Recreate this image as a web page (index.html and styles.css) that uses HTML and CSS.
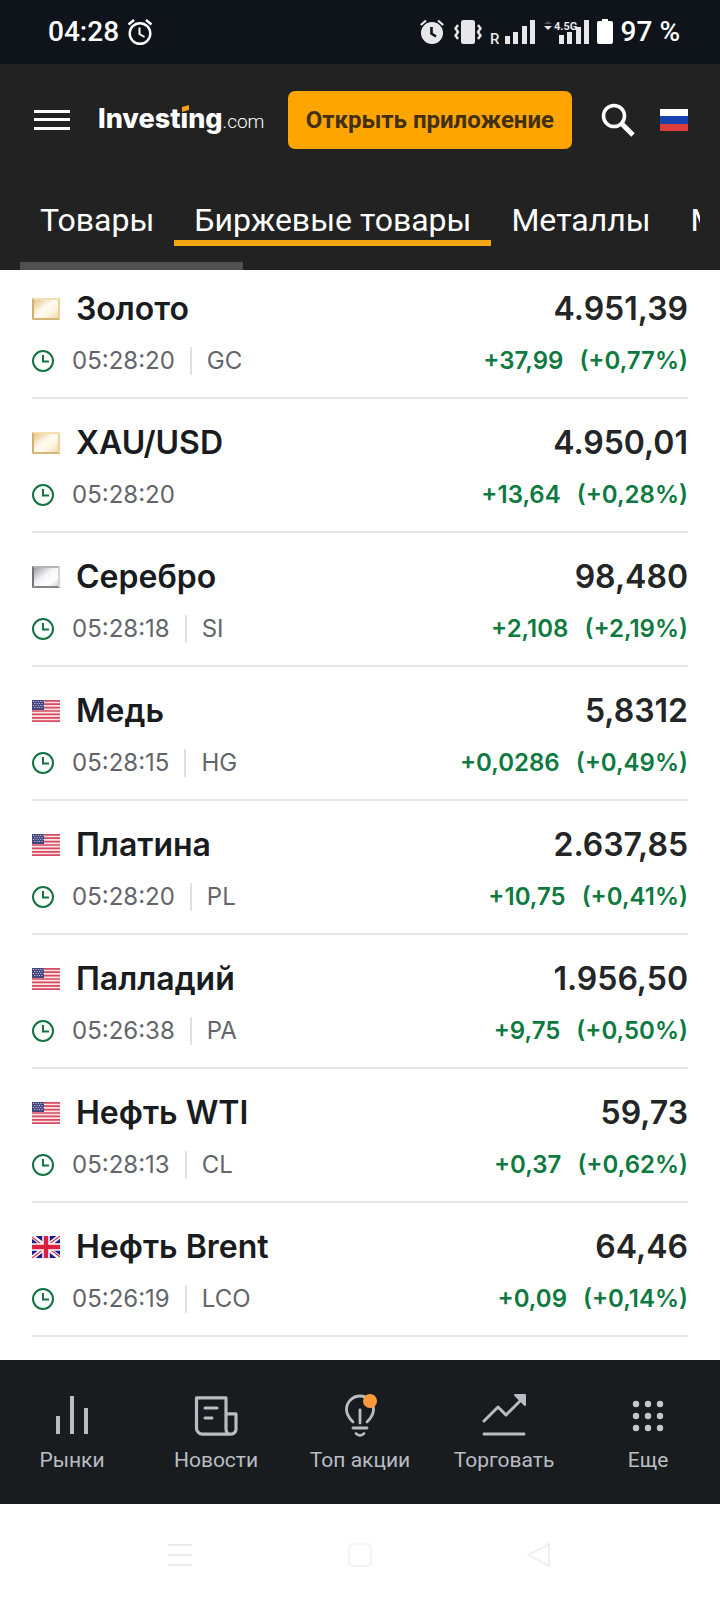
FILE: index.html
```html
<!DOCTYPE html>
<html lang="ru">
<head>
  <meta charset="UTF-8">
  <meta name="viewport" content="width=device-width, initial-scale=1.0">
  <title>Биржевые товары - Investing.com</title>
  <link rel="stylesheet" href="styles.css">
</head>
<body>
  <!-- shared icons -->
  <svg class="sprite" width="0" height="0" aria-hidden="true">
    <defs>
      <linearGradient id="goldFill" x1="0" y1="0" x2="1" y2="1">
        <stop offset="0" stop-color="#dcba72"/>
        <stop offset="0.45" stop-color="#fffaf0"/>
        <stop offset="0.65" stop-color="#fff7e4"/>
        <stop offset="1" stop-color="#ead09a"/>
      </linearGradient>
      <linearGradient id="silverFill" x1="0" y1="0" x2="1" y2="1">
        <stop offset="0" stop-color="#8d8d90"/>
        <stop offset="0.45" stop-color="#f4f4f6"/>
        <stop offset="0.7" stop-color="#ffffff"/>
        <stop offset="1" stop-color="#c4c4c8"/>
      </linearGradient>
    </defs>
    <symbol id="clock" viewBox="0 0 22 22">
      <circle cx="11" cy="11" r="10" fill="none" stroke="#147243" stroke-width="2"/>
      <path d="M11 5v6.500h6" fill="none" stroke="#147243" stroke-width="2"/>
    </symbol>
    <symbol id="gold" viewBox="0 0 28 22">
      <path fill="url(#goldFill)" d="M0 0h28v22H0z"/>
      <path fill="#d2b06c" d="M0 0l2 2v18l-2 2z"/>
      <path fill="#f3dfb0" d="M0 0h28l-2 2H2z"/>
      <path fill="#ecd29a" d="M28 0v22l-2-2V2z"/>
      <path fill="#d6b676" d="M0 22l2-2h24l2 2z"/>
    </symbol>
    <symbol id="silver" viewBox="0 0 28 22">
      <path fill="url(#silverFill)" d="M0 0h28v22H0z"/>
      <path fill="#747477" d="M0 0l2 2v18l-2 2z"/>
      <path fill="#b4b4b7" d="M0 0h28l-2 2H2z"/>
      <path fill="#d4d4d7" d="M28 0v22l-2-2V2z"/>
      <path fill="#87878a" d="M0 22l2-2h24l2 2z"/>
    </symbol>
    <symbol id="us" viewBox="0 0 28 22">
      <path fill="#fbe3e6" d="M0 0h28v22H0z"/>
      <path stroke="#d84b60" stroke-width="1.7" d="M0 .9h28M0 4.2h28M0 7.6h28M0 11h28M0 14.4h28M0 17.8h28M0 21.1h28"/>
      <path fill="#46467f" d="M0 0h12v10H0z"/>
      <path stroke="#c9c9e0" stroke-width="1" stroke-dasharray="1 1.4" d="M1 1.5h10.500M2.200 3.500h9M1 5.500h10.500M2.200 7.500h9"/>
    </symbol>
    <symbol id="gb" viewBox="0 0 28 22">
      <path fill="#1a1a8c" d="M0 0h28v22H0z"/>
      <path stroke="#fff" stroke-width="4.400" d="M0 0l28 22M28 0L0 22"/>
      <path stroke="#dc3550" stroke-width="1.300" d="M0 1l13 10M28 0L15 10M28 21L15 11M0 22l13-10"/>
      <path stroke="#fff" stroke-width="7.500" d="M14 0v22M0 11h28"/>
      <path stroke="#dc2040" stroke-width="4.500" d="M14 0v22M0 11h28"/>
    </symbol>
  </svg>

  <div class="status-bar">
    <div class="status-left">
      <span>04:28</span>
      <svg width="26" height="26" viewBox="0 0 26 26" fill="none" stroke="#fff" stroke-width="2.400">
        <circle cx="13" cy="14.500" r="10.300"/>
        <path d="M1.500 5.500L7 1M24.500 5.500L19 1"/>
        <path d="M12.500 8.500v6.500l5 3" stroke-width="2"/>
      </svg>
    </div>
    <div class="status-right">
      <svg class="signals" width="169" height="26" viewBox="0 0 169 26" fill="#e8e8ea" aria-hidden="true">
        <circle cx="12" cy="14" r="11"/>
        <path d="M.8 6L6 1.500M23.200 6L18 1.500" fill="none" stroke="#e8e8ea" stroke-width="2.200"/>
        <path d="M11.500 8v6.500l4.500 3" fill="none" stroke="#0f131a" stroke-width="2.600"/>
        <rect x="41" y="1" width="14" height="24" rx="2.500"/>
        <path d="M38 6l-2.500 3.500 2.500 3.500-2.500 3.500 2.500 3.500M58 6l2.500 3.500-2.500 3.500 2.500 3.500-2.500 3.500" fill="none" stroke="#e8e8ea" stroke-width="2.400"/>
        <text x="70" y="25" class="net-roaming">R</text>
        <path d="M85 17h5v8h-5zM93 13h5v12h-5zM102 7h5v18h-5zM110 1h5v24h-5z"/>
        <path d="M124 5l4-3 4 3z" fill="#4a4d55"/>
        <path d="M124 7h8l-4 4z"/>
        <text x="134" y="11" class="net-type">4.5G</text>
        <path d="M139 16h5v9h-5zM147 13h5v12h-5zM156 8h5v17h-5zM164 1h5v24h-5z"/>
      </svg>
      <svg width="16" height="26" viewBox="0 0 16 26" fill="#fff" aria-hidden="true">
        <path d="M5 0h6v2h3a2 2 0 0 1 2 2v19a2 2 0 0 1-2 2H2a2 2 0 0 1-2-2V4a2 2 0 0 1 2-2h3z"/>
      </svg>
      <span>97 %</span>
    </div>
  </div>

  <header class="header">
    <div class="header-top">
      <button class="icon-btn" aria-label="Меню">
        <svg width="38" height="22" viewBox="0 0 38 22" fill="#fff"><path d="M2 1h36v3H2zM2 9h36v3H2zM2 18h36v3H2z"/></svg>
      </button>
      <a class="logo" href="#"><span class="logo-name">Invest<span class="logo-i">i</span>ng</span><span class="logo-com">.com</span></a>
      <a class="open-app" href="#">Открыть приложение</a>
      <button class="icon-btn search" aria-label="Поиск">
        <svg width="34" height="34" viewBox="0 0 34 34" fill="none" stroke="#fff">
          <circle cx="13" cy="13" r="10.500" stroke-width="3.600"/>
          <path d="M21 21l11 11" stroke-width="5"/>
        </svg>
      </button>
      <button class="icon-btn" aria-label="Язык">
        <svg width="28" height="22" viewBox="0 0 28 22">
          <path fill="#fff" d="M0 0h28v7H0z"/>
          <path fill="#1743b0" d="M0 7h28v8H0z"/>
          <path fill="#dc3d3a" d="M0 15h28v7H0z"/>
        </svg>
      </button>
    </div>
    <nav class="tabs">
      <a href="#">Товары</a>
      <a href="#" class="active">Биржевые товары</a>
      <a href="#">Металлы</a>
      <a href="#">Мягкие</a>
    </nav>
    <div class="tabs-scroll"></div>
  </header>

  <main>
    <ul class="quotes">
      <li class="quote">
        <div class="line"><svg class="flag"><use href="#gold"/></svg><a class="name" href="#">Золото</a><span class="price">4.951,39</span></div>
        <div class="line meta"><svg class="clock"><use href="#clock"/></svg><time>05:28:20</time><span class="code">GC</span><span class="change">+37,99</span><span class="percent">(+0,77%)</span></div>
      </li>
      <li class="quote">
        <div class="line"><svg class="flag"><use href="#gold"/></svg><a class="name" href="#">XAU/USD</a><span class="price">4.950,01</span></div>
        <div class="line meta"><svg class="clock"><use href="#clock"/></svg><time>05:28:20</time><span class="change">+13,64</span><span class="percent">(+0,28%)</span></div>
      </li>
      <li class="quote">
        <div class="line"><svg class="flag"><use href="#silver"/></svg><a class="name" href="#">Серебро</a><span class="price">98,480</span></div>
        <div class="line meta"><svg class="clock"><use href="#clock"/></svg><time>05:28:18</time><span class="code">SI</span><span class="change">+2,108</span><span class="percent">(+2,19%)</span></div>
      </li>
      <li class="quote">
        <div class="line"><svg class="flag"><use href="#us"/></svg><a class="name" href="#">Медь</a><span class="price">5,8312</span></div>
        <div class="line meta"><svg class="clock"><use href="#clock"/></svg><time>05:28:15</time><span class="code">HG</span><span class="change">+0,0286</span><span class="percent">(+0,49%)</span></div>
      </li>
      <li class="quote">
        <div class="line"><svg class="flag"><use href="#us"/></svg><a class="name" href="#">Платина</a><span class="price">2.637,85</span></div>
        <div class="line meta"><svg class="clock"><use href="#clock"/></svg><time>05:28:20</time><span class="code">PL</span><span class="change">+10,75</span><span class="percent">(+0,41%)</span></div>
      </li>
      <li class="quote">
        <div class="line"><svg class="flag"><use href="#us"/></svg><a class="name" href="#">Палладий</a><span class="price">1.956,50</span></div>
        <div class="line meta"><svg class="clock"><use href="#clock"/></svg><time>05:26:38</time><span class="code">PA</span><span class="change">+9,75</span><span class="percent">(+0,50%)</span></div>
      </li>
      <li class="quote">
        <div class="line"><svg class="flag"><use href="#us"/></svg><a class="name" href="#">Нефть WTI</a><span class="price">59,73</span></div>
        <div class="line meta"><svg class="clock"><use href="#clock"/></svg><time>05:28:13</time><span class="code">CL</span><span class="change">+0,37</span><span class="percent">(+0,62%)</span></div>
      </li>
      <li class="quote">
        <div class="line"><svg class="flag"><use href="#gb"/></svg><a class="name" href="#">Нефть Brent</a><span class="price">64,46</span></div>
        <div class="line meta"><svg class="clock"><use href="#clock"/></svg><time>05:26:19</time><span class="code">LCO</span><span class="change">+0,09</span><span class="percent">(+0,14%)</span></div>
      </li>
    </ul>
  </main>

  <nav class="bottom-nav">
    <a href="#">
      <svg width="44" height="44" viewBox="0 0 44 44" fill="#b9bdc3"><path d="M6 22h4v18H6zM20 2h4v38h-4zM34 14h4v26h-4z"/></svg>
      <span>Рынки</span>
    </a>
    <a href="#">
      <svg width="44" height="44" viewBox="0 0 44 44" fill="none" stroke="#b9bdc3" stroke-width="3.200" stroke-linejoin="round">
        <path d="M36 40.200H8.500a6 6 0 0 1-6-6V3.800H32v31.400a5 5 0 0 0 5 5 5 5 0 0 0 5-5V19.800H32"/>
        <path d="M11 14h12M11 24h7" stroke-width="3" stroke-linecap="round"/>
      </svg>
      <span>Новости</span>
    </a>
    <a href="#">
      <svg width="44" height="44" viewBox="0 0 44 44" fill="none" stroke="#b9bdc3" stroke-width="2.800" stroke-linecap="round">
        <path d="M15 28c-4-4-6.500-7.500-6.500-12.500a13 13 0 0 1 27 0c0 5-2.500 8.500-6.500 12.500"/>
        <path d="M15 34h14M18 39.500c2 2.500 6 2.500 8 0M22 16v13"/>
        <circle cx="32" cy="7" r="7" fill="#ff9a3c" stroke="none"/>
      </svg>
      <span>Топ акции</span>
    </a>
    <a href="#">
      <svg width="44" height="44" viewBox="0 0 44 44" fill="none" stroke="#b9bdc3" stroke-width="3" stroke-linecap="round" stroke-linejoin="round">
        <path d="M2 27l14-14 8 8L39 6M2 40h40"/>
        <path d="M33 1h10v10z" fill="#b9bdc3" stroke-width="2"/>
      </svg>
      <span>Торговать</span>
    </a>
    <a href="#">
      <svg width="44" height="44" viewBox="0 0 44 44" fill="#c4c8cd">
        <circle cx="10" cy="10" r="3.200"/><circle cx="22" cy="10" r="3.200"/><circle cx="34" cy="10" r="3.200"/>
        <circle cx="10" cy="22" r="3.200"/><circle cx="22" cy="22" r="3.200"/><circle cx="34" cy="22" r="3.200"/>
        <circle cx="10" cy="34" r="3.200"/><circle cx="22" cy="34" r="3.200"/><circle cx="34" cy="34" r="3.200"/>
      </svg>
      <span>Еще</span>
    </a>
  </nav>

  <div class="system-nav">
    <button class="icon-btn" aria-label="Недавние"><svg width="26" height="26" viewBox="0 0 26 26" stroke="#ebebeb" stroke-width="2"><path d="M1 3h24M1 13h24M1 23h24"/></svg></button>
    <button class="icon-btn" aria-label="Домой"><svg width="26" height="26" viewBox="0 0 26 26" fill="none" stroke="#f3f3f3" stroke-width="2"><rect x="2" y="2" width="22" height="22" rx="4"/></svg></button>
    <button class="icon-btn" aria-label="Назад"><svg width="26" height="26" viewBox="0 0 26 26" fill="none" stroke="#f0f0f0" stroke-width="2"><path d="M22 2v22L1 13z"/></svg></button>
  </div>
</body>
</html>
```

FILE: styles.css
```css
* {
  box-sizing: border-box;
}
body {
  margin: 0;
  font-family: Inter, "Noto Sans", sans-serif;
  background: #fff;
  color: #181c1f;
}
a {
  color: inherit;
  text-decoration: none;
}
svg {
  display: block;
  flex-shrink: 0;
}
.sprite {
  position: absolute;
}
.icon-btn {
  padding: 0;
  border: none;
  background: none;
  cursor: pointer;
}

/* status bar */
.status-bar {
  display: flex;
  justify-content: space-between;
  align-items: center;
  height: 64px;
  padding: 0 40px 0 48px;
  background: #0f131a;
  color: #fff;
  font: 500 28px/32px Roboto, sans-serif;
}
.status-left,
.status-right {
  display: flex;
  align-items: center;
  gap: 8px;
}
.signals {
  overflow: visible;
}
.net-roaming {
  font: 500 15px Roboto, sans-serif;
}
.net-type {
  font: 700 11px Roboto, sans-serif;
}

/* header */
.header {
  background: #222;
  color: #fff;
  font-family: Roboto, sans-serif;
}
.header-top {
  display: flex;
  align-items: center;
  padding: 27px 32px 0;
}
.logo {
  display: flex;
  align-items: baseline;
  margin-left: 28px;
  white-space: nowrap;
}
.logo-name {
  font: 800 27px/32px Inter, sans-serif;
}
.logo-i {
  position: relative;
}
.logo-i::before {
  content: "";
  position: absolute;
  left: 0;
  top: 3px;
  width: 100%;
  height: 8px;
  background: #222;
}
.logo-i::after {
  content: "";
  position: absolute;
  left: 1px;
  top: 4px;
  width: 7px;
  height: 5px;
  background: #f7a11b;
  transform: skewY(-16deg);
}
.logo-com {
  font: 300 19px/32px Roboto, sans-serif;
}
.open-app {
  margin-left: auto;
  padding: 0 18px;
  border-radius: 7px;
  background: #ffa500;
  color: #42300f;
  font-size: 24px;
  font-weight: 700;
  line-height: 58px;
  white-space: nowrap;
}
.search {
  margin: 0 25px 0 29px;
}
.tabs {
  display: flex;
  margin: 48px 20px 0;
  overflow: hidden;
}
.tabs a {
  flex-shrink: 0;
  padding: 3px 20px 0;
  border-bottom: 6px solid transparent;
  font-size: 32px;
  line-height: 40px;
}
.tabs .active {
  border-color: #f4a512;
}
.tabs-scroll {
  width: 31%;
  height: 8px;
  margin: 16px 20px 0;
  background: #505050;
}

/* quotes */
.quotes {
  margin: 0;
  padding: 0 32px 23px;
  list-style: none;
}
.quote {
  display: grid;
  gap: 18px;
  padding: 24px 0 22px;
  border-bottom: 2px solid #e6e9eb;
}
.quote:first-child {
  padding-top: 19px;
}
.line {
  display: flex;
  align-items: center;
  font-size: 32px;
  font-weight: 600;
  line-height: 40px;
}
.meta {
  font-size: 24px;
  line-height: 28px;
}
.flag {
  width: 28px;
  height: 22px;
  margin-right: 16px;
}
.clock {
  width: 22px;
  height: 22px;
  margin-right: 18px;
}
.meta time,
.code {
  color: #62656a;
  font-weight: 400;
}
.code {
  margin-left: 15px;
  padding-left: 15px;
  border-left: 2px solid #dfe2e4;
}
.price,
.change {
  margin-left: auto;
}
.price {
  color: #232526;
}
.change,
.percent {
  color: #0e7a3f;
}
.percent {
  margin-left: 16px;
}

/* bottom navigation */
.bottom-nav {
  display: grid;
  grid-template-columns: repeat(5, 1fr);
  height: 144px;
  padding-top: 34px;
  background: #181c1f;
  color: #b9bdc3;
  font: 400 21px/32px Roboto, sans-serif;
}
.bottom-nav a {
  display: flex;
  flex-direction: column;
  align-items: center;
  gap: 6px;
}
.system-nav {
  display: flex;
  justify-content: center;
  gap: 154px;
  padding: 38px 0 32px;
}
```
